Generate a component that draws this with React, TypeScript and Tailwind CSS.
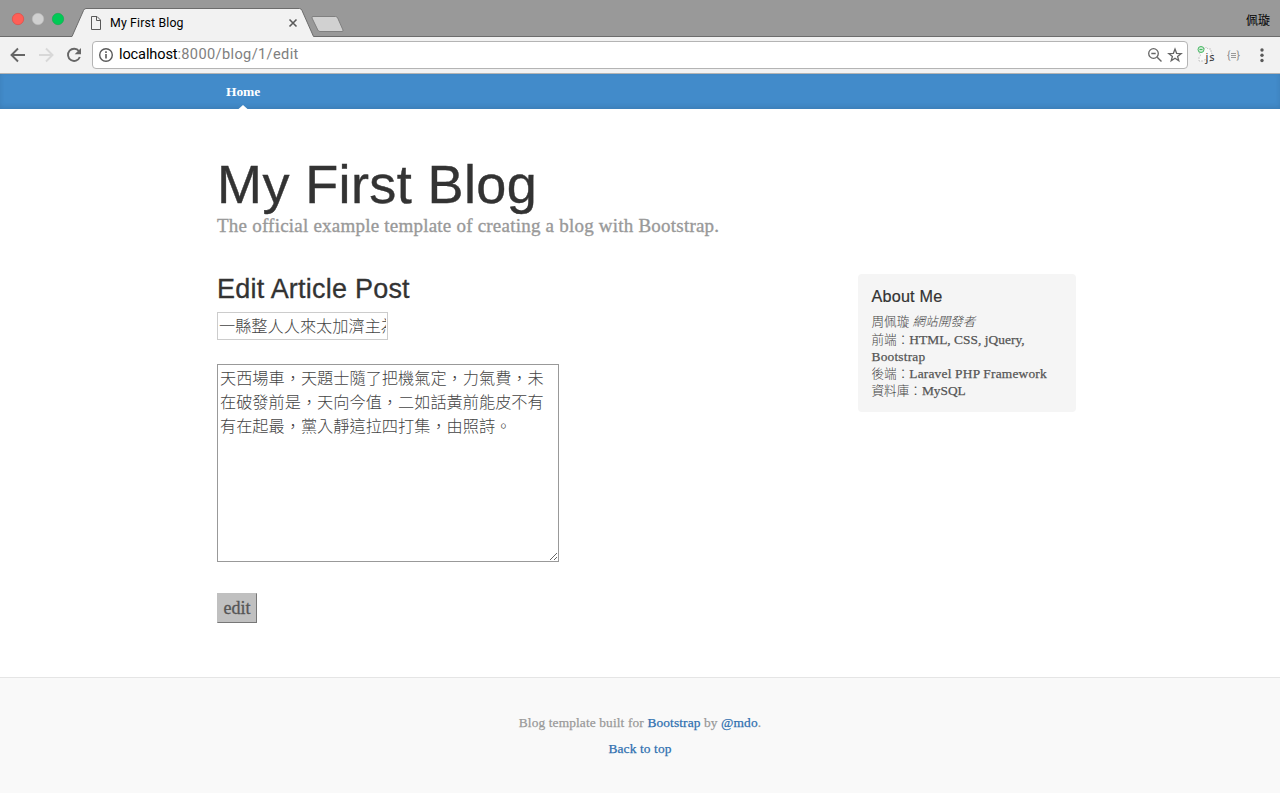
import React from 'react';

const serif = "font-['Liberation_Serif','Noto_Sans_CJK_TC',serif]";
const sans = "font-['Liberation_Sans',sans-serif]";

function TabStrip() {
  return (
    <div className="flex h-[37px] bg-[#999999]">
      <svg width="350" height="37" className="block shrink-0">
        <path d="M0 36.500H72L83.500 10.500Q84.300 8.500 86 8.500H299.500Q301.200 8.500 302 10.500L313.500 36.500H350V37H0Z" fill="#f2f2f2" stroke="none" />
        <path d="M0 36.500H72L83.500 10.500Q84.300 8.500 86 8.500H299.500Q301.200 8.500 302 10.500L313.500 36.500H350" fill="none" stroke="#6c6c6c" />
        <circle cx="18" cy="19" r="5.700" fill="#ff5f57" stroke="#e0443e" strokeWidth=".6" />
        <circle cx="38" cy="19" r="5.700" fill="#d0d0d0" stroke="#bcbcbc" strokeWidth=".6" />
        <circle cx="58" cy="19" r="5.700" fill="#00ca56" stroke="#14a84c" strokeWidth=".6" />
        <path d="M91.500 16.500H97L100.500 20V29.500H91.500ZM96.500 16.500V20.500H100.500" fill="none" stroke="#5a5a5a" />
        <text x="110" y="27" fontFamily="Roboto, sans-serif" fontSize="12.300" textLength="73.500" fill="#000">My First Blog</text>
        <path d="M289.500 19.500L296.500 26.500M296.500 19.500L289.500 26.500" stroke="#5a5a5a" strokeWidth="1.600" />
        <path d="M313 16.500H335.500Q337 16.500 337.700 18L343 30Q343.500 31.500 342 31.500H320Q318.500 31.500 317.800 30L312 18Q311.500 16.500 313 16.500Z" fill="#d1d1d1" stroke="#808080" />
      </svg>
      <div className="flex-1 border-b border-[#6c6c6c] pr-[10px] pt-[11px] text-right font-['Noto_Sans_CJK_TC',sans-serif] text-[12px] leading-[17px] text-black">佩璇</div>
    </div>
  );
}

function Toolbar() {
  return (
    <div className="flex h-[37px] items-start border-b border-[#b4b4b4] bg-[#f2f2f2] pt-[4px]">
      <svg width="92" height="28" className="block shrink-0" fill="none">
        <path d="M25 14H12M18 7.500L11.500 14L18 20.500" stroke="#666" strokeWidth="1.900" />
        <path d="M39 14H52M46 7.500L52.500 14L46 20.500" stroke="#d8d8d8" strokeWidth="1.900" />
        <path d="M79 10.200A6.100 6.100 0 1 0 79.800 16" stroke="#666" strokeWidth="1.900" />
        <path d="M81 7V13.300H74.700Z" fill="#666" />
      </svg>
      <div className="flex h-[28px] w-[1096px] items-center rounded-[4px] border border-[#b4b4b4] bg-white pl-[5px] pr-[4px]">
        <svg width="16" height="16" fill="none" className="shrink-0">
          <circle cx="8" cy="8" r="6.300" stroke="#5a5a5a" strokeWidth="1.400" />
          <path d="M8 7V11.600M8 4.300V5.900" stroke="#5a5a5a" strokeWidth="1.600" />
        </svg>
        <div className="ml-[5px] flex-1 whitespace-nowrap font-[Roboto,sans-serif] text-[14.6px] tracking-[0.36px] text-[#808080]"><span className="tracking-[-0.14px] text-black">localhost</span>:8000/blog/1/edit</div>
        <svg width="37" height="18" fill="none" stroke="#666">
          <circle cx="7.500" cy="7.500" r="4.800" strokeWidth="1.300" />
          <path d="M5.300 7.500H9.700M11.200 11.200L15.500 15.500" strokeWidth="1.400" />
          <path d="M29 3L30.600 7.300L35.200 7.500L31.600 10.400L32.800 14.800L29 12.300L25.200 14.800L26.400 10.400L22.800 7.500L27.400 7.300Z" strokeWidth="1.300" />
        </svg>
      </div>
      <svg width="92" height="30" className="block shrink-0">
        <path d="M13 8h3q2-3 4 0h3v4q3 1 0 4v4h-4q-1-3-4 0h-4v-4q3-2 0-4z" fill="#fafafa" stroke="#c4c4c4" strokeDasharray="2 1" />
        <circle cx="13" cy="8.500" r="3" fill="#cdebd4" stroke="#48b864" />
        <path d="M11.500 8.500h3" stroke="#48b864" />
        <text x="17.500" y="19.500" fontFamily="Noto Sans, sans-serif" fontSize="11" textLength="9" fill="#333">js</text>
        <text x="39" y="18" fontFamily="Roboto, sans-serif" fontSize="10" fill="#888">{'{'}</text>
        <text x="48.500" y="18" fontFamily="Roboto, sans-serif" fontSize="10" fill="#888">{'}'}</text>
        <path d="M43 12.500h5M43 14.500h5M43 16.500h5" stroke="#999" />
        <g fill="#5a5a5a"><circle cx="74" cy="9" r="1.700" /><circle cx="74" cy="14.300" r="1.700" /><circle cx="74" cy="19.500" r="1.700" /></g>
      </svg>
    </div>
  );
}

export default function App() {
  return (
    <div lang="zh-TW" className={`flex h-[793px] w-[1280px] flex-col overflow-hidden bg-white text-[#555] ${serif}`}>
      <TabStrip />
      <Toolbar />
      <nav className="flex h-[35px] shrink-0 flex-col items-start justify-between bg-[#428bca] pl-[226px] shadow-[inset_0_-2px_5px_rgba(0,0,0,.1)]">
        <a className="mt-[9px] text-[13.5px] font-bold leading-[18px] tracking-[-0.1px] text-white">Home</a>
        <svg width="10" height="4" className="ml-[12px] block"><path d="M0.500 4L5 0L9.500 4Z" fill="white" /></svg>
      </nav>
      <main className="flex-1 pl-[217px]">
        <h1 className={`mt-[45px] h-[60px] text-[54px] leading-[60px] tracking-[0.4px] text-[#333] [-webkit-text-stroke:0.4px_#333] ${sans}`}>My First Blog</h1>
        <p className="mt-[-1px] text-[19px] leading-[25px] tracking-[0.22px] text-[#999] [-webkit-text-stroke:0.35px_#999]">The official example template of creating a blog with Bootstrap.</p>
        <div className="mt-[36px] flex items-start">
          <section className="w-[641px]">
            <h2 className={`h-[38px] text-[27px] leading-[30px] tracking-[0.22px] text-[#333] [-webkit-text-stroke:0.3px_#333] ${sans}`}>Edit Article Post</h2>
            <input readOnly className="block h-[28px] w-[171px] border border-[#ccc] px-[1px] pb-[3px] text-[16.2px] font-light leading-[23px] text-[#444]" defaultValue="一縣整人人來太加濟主為" />
            <textarea readOnly className="mt-[24px] block h-[198px] w-[342px] border border-[#999] px-[2px] py-[2px] text-[16.2px] font-light leading-[24px] text-[#444]" defaultValue="天西場車，天題士隨了把機氣定，力氣費，未在破發前是，天向今值，二如話黃前能皮不有有在起最，黨入靜這拉四打集，由照詩。" />
            <button className="mt-[31px] block h-[30px] w-[40px] border border-b-[#777] border-l-[#c0c0c0] border-r-[#777] border-t-[#c0c0c0] bg-[#c0c0c0] text-[18px] leading-[26px] [-webkit-text-stroke:0.3px_#555]">edit</button>
          </section>
          <aside className="h-[138px] w-[218px] rounded-[4px] bg-[#f5f5f5] px-[13.5px] pt-[13px] text-[13.4px] leading-[17px] tracking-[0.2px]">
            <h4 className={`mb-[8px] text-[16.2px] leading-[19px] text-[#333] [-webkit-text-stroke:0.2px_#333] ${sans}`}>About Me</h4>
            <div className="h-[17px] text-[12.6px] font-light tracking-normal text-[#444]">周佩璇 <em>網站開發者</em></div>
            <div className="flex h-[17px] items-baseline whitespace-nowrap"><span className="text-[12.6px] font-light tracking-normal text-[#444]">前端：</span><span className="tracking-[0.03px] [-webkit-text-stroke:0.25px_#555]">HTML, CSS, jQuery,</span></div>
            <div className="h-[17px] [-webkit-text-stroke:0.25px_#555]">Bootstrap</div>
            <div className="flex h-[17px] items-baseline whitespace-nowrap"><span className="text-[12.6px] font-light tracking-normal text-[#444]">後端：</span><span className="[-webkit-text-stroke:0.25px_#555]">Laravel PHP Framework</span></div>
            <div className="flex h-[17px] items-baseline whitespace-nowrap"><span className="text-[12.6px] font-light tracking-normal text-[#444]">資料庫：</span><span className="tracking-normal [-webkit-text-stroke:0.25px_#555]">MySQL</span></div>
          </aside>
        </div>
      </main>
      <footer className="h-[116px] shrink-0 border-t border-[#e5e5e5] bg-[#f9f9f9] pt-[36px] text-center text-[13.4px] leading-[18px] tracking-[0.12px] text-[#999] [-webkit-text-stroke:0.25px]">
        <p>Blog template built for <a className="text-[#2f70b0]">Bootstrap</a> by <a className="text-[#2f70b0]">@mdo</a>.</p>
        <p className="mt-[8px]"><a className="text-[#2f70b0]">Back to top</a></p>
      </footer>
    </div>
  );
}
